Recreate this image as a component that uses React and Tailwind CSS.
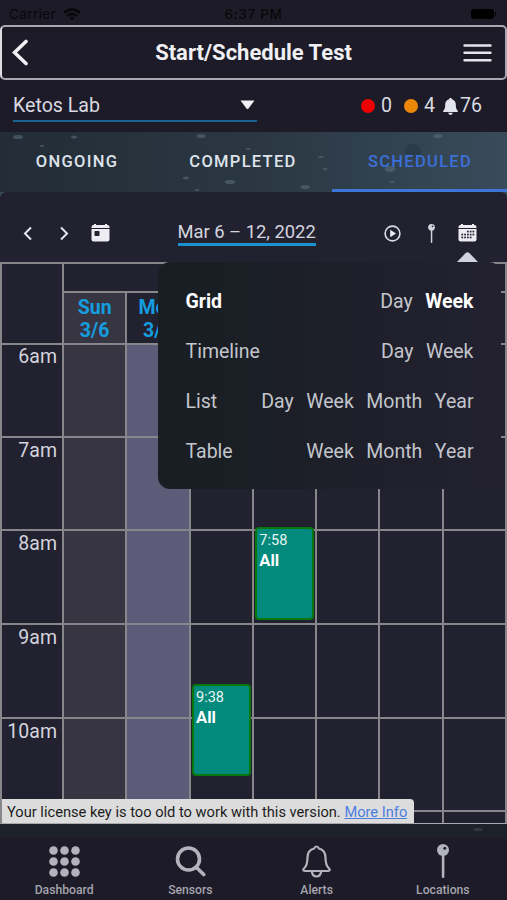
import React from 'react';

const HOURS = ['6am', '7am', '8am', '9am', '10am'];

const VIEWS = [
  { name: 'Grid', options: ['Day', 'Week'], active: true },
  { name: 'Timeline', options: ['Day', 'Week'] },
  { name: 'List', options: ['Day', 'Week', 'Month', 'Year'] },
  { name: 'Table', options: ['Week', 'Month', 'Year'] },
];

const DROPS = [
  [18, 5, 5, 2], [74, 5, 3, 1.5], [42, 14, 2.5, 1], [201, 4, 4.5, 2], [248, 17, 2.5, 1],
  [186, 46, 3, 1.5], [230, 50, 5.5, 2.2], [197, 58, 2.5, 1], [321, 25, 3, 1], [325, 37, 2.5, 1],
  [305, 55, 4.5, 2], [438, 4, 4.5, 2], [390, 37, 5.5, 3], [392, 50, 2.5, 1],
];

function Status() {
  return (
    <div className="flex h-[25px] shrink-0 items-center px-[9px] pt-[3px] text-[14.5px] leading-[20px] text-[#08080b]">
      <div className="flex flex-1 items-center gap-[7px]">
        <span className="font-['Inter','Roboto',sans-serif] text-[13.5px] tracking-[0.4px]">Carrier</span>
        <svg width="18" height="13" viewBox="0 0 18 13" fill="none" stroke="#08080b" strokeWidth="2.4">
          <path d="M1 4.8a11.5 11.5 0 0 1 16 0M4 8a7.2 7.2 0 0 1 10 0" />
          <path d="M9 12.5 6.5 10a3.6 3.6 0 0 1 5 0Z" fill="#08080b" stroke="none" />
        </svg>
      </div>
      <span className="pl-[2px] font-['Inter','Roboto',sans-serif] text-[13.5px] font-medium tracking-[0.7px]">6:37 PM</span>
      <div className="flex flex-1 items-center justify-end gap-px pr-[2px]">
        <div className="h-[10px] w-[23px] rounded-[3px] bg-black" />
        <div className="h-1 w-[1.5px] rounded-r bg-black" />
      </div>
    </div>
  );
}

function Pin({ w, h, color }) {
  return (
    <svg width={w} height={h} viewBox="0 0 12 34" fill={color}>
      <rect x="4.8" y="10" width="2.6" height="24" rx="1.2" />
      <circle cx="6" cy="6" r="6" />
      <circle cx="7.8" cy="4.2" r="1.5" fill="#22222f" />
    </svg>
  );
}

function Tabs() {
  return (
    <div className="relative grid h-[60px] shrink-0 grid-cols-[153px_179px_175px] bg-gradient-to-r from-[#232c37] via-[#2a3742] to-[#394b5b]">
      <svg className="absolute inset-0" width="507" height="60" fill="#5c707e" fillOpacity="0.55">
        <ellipse cx="413" cy="19" rx="8" ry="7" fill="#263442" />
        {DROPS.map(([x, y, rx, ry]) => (
          <ellipse key={x} cx={x} cy={y} rx={rx} ry={ry} />
        ))}
      </svg>
      {['ONGOING', 'COMPLETED', 'SCHEDULED'].map((t, i) => (
        <div
          key={t}
          className={
            'relative flex items-center justify-center border-b-[3px] pt-[3px] pl-px text-[16.5px] font-medium tracking-[1.3px] ' +
            (i === 2 ? 'border-[#3d75d8] text-[#3b70d8]' : 'border-transparent text-[#dfe3ea]')
          }
        >
          {t}
        </div>
      ))}
    </div>
  );
}

function Toolbar() {
  return (
    <div className="relative flex h-[70px] shrink-0 items-center rounded-t-md bg-[#222130] pt-[12px]">
      <div className="flex w-[177.500px] items-center pl-[23px]">
        <svg width="10" height="15" viewBox="0 0 10 15" fill="none" stroke="#e4e4ec" strokeWidth="2"><path d="M8 1.5 2 7.5l6 6" /></svg>
        <svg className="ml-[26px]" width="10" height="15" viewBox="0 0 10 15" fill="none" stroke="#e4e4ec" strokeWidth="2"><path d="m2 1.5 6 6-6 6" /></svg>
        <svg className="ml-[22px]" width="19" height="18" viewBox="0 0 19 18" fill="#ececf2">
          <path d="M2.5 1H3V0h2v1h9V0h2v1h.5A2 2 0 0 1 18.500 3v1H.5V3a2 2 0 0 1 2-2Z" />
          <path d="M.5 5h18V15.500a2 2 0 0 1-2 2h-14a2 2 0 0 1-2-2Z" />
          <rect x="3.500" y="7" width="5" height="5" rx=".8" fill="#222130" />
        </svg>
      </div>
      <div className="-mt-[1px] h-[26px] w-[138px] border-b-[3px] border-[#1b92d0] text-[18.350px] leading-[24px] whitespace-nowrap text-[#d5d5df]">Mar 6 – 12, 2022</div>
      <svg className="ml-[68px]" width="17" height="17" viewBox="0 0 17 17" fill="none" stroke="#dcdce4" strokeWidth="1.6">
        <circle cx="8.500" cy="8.500" r="7.400" />
        <path d="M6.200 4.800v7.400l5.800-3.700Z" fill="#ececf2" stroke="none" />
      </svg>
      <div className="ml-[27px] flex"><Pin w={7} h={19} color="#d4d4dc" /></div>
      <svg className="ml-[23.500px]" width="19" height="18" viewBox="0 0 19 18" fill="#ececf2">
        <path d="M2.500 1H3V0h2v1h9V0h2v1h.5A2 2 0 0 1 18.500 3v1H.5V3a2 2 0 0 1 2-2Z" />
        <path d="M.5 5h18V15.500a2 2 0 0 1-2 2h-14a2 2 0 0 1-2-2Z" />
        <g fill="#222130">
          {[[9, 6.700], [11.800, 6.700], [14.500, 6.700], [6.200, 9.700], [9, 9.700], [11.800, 9.700], [14.500, 9.700], [3.400, 9.700], [3.400, 12.600], [6.200, 12.600], [9, 12.600], [11.800, 12.600]].map(([x, y]) => (
            <rect key={`${x}-${y}`} x={x} y={y} width="1.700" height="1.700" />
          ))}
        </g>
      </svg>
      <svg className="absolute right-[29px] bottom-0" width="21" height="10" viewBox="0 0 21 10" fill="#d3d3df"><path d="M0 10 8.500 1.200q2-1.700 4 0L21 10Z" /></svg>
    </div>
  );
}

function Event({ time, className }) {
  return (
    <div className={'absolute left-[1px] z-10 w-[59px] rounded-[4px] border-2 border-[#08780e] bg-[#038a7c] px-[2.500px] pt-[1px] text-[#e9f5f3] ' + className}>
      <div className="text-[14.500px] leading-[21px]">{time}</div>
      <div className="text-[16.500px] leading-[19px] font-bold text-white">All</div>
    </div>
  );
}

function Calendar() {
  return (
    <div className="relative flex h-[562px] shrink-0 flex-col overflow-hidden border-2 border-b border-[#86868b] border-b-[#aaaab0] bg-[#222130]">
      <div className="relative z-10 flex h-[81px] shrink-0 border-b-2 border-[#86868b]">
        <div className="w-[60px] shrink-0" />
        <div className="flex flex-1 flex-col">
          <div className="h-[29px] border-b-2 border-l-2 border-[#86868b]" />
          <div className="grid flex-1 grid-cols-7 text-center text-[19.500px] leading-[23px] font-bold text-[#149ee0]">
            <div className="border-l-2 border-[#86868b] bg-[#373541] pt-[3px]">Sun<br />3/6</div>
            <div className="border-l-2 border-[#86868b] pt-[3px]">Mon<br />3/7</div>
            {['Tue', 'Wed', 'Thu', 'Fri', 'Sat'].map((d) => <div key={d} className="border-l-2 border-[#86868b]" />)}
          </div>
        </div>
      </div>
      <div className="-mt-px flex shrink-0">
        <div className="w-[60px] shrink-0">
          {HOURS.map((h) => (
            <div key={h} className="h-[93.700px] border-b-2 border-[#86868b] pr-[5px] text-right text-[19.500px] leading-[25px] text-[#d4d4de]">{h}</div>
          ))}
        </div>
        <div className="grid flex-1 grid-cols-7">
          {[0, 1, 2, 3, 4, 5, 6].map((d) => (
            <div
              key={d}
              className={'relative h-[500px] border-l-2 border-[#86868b] ' + (d === 0 ? 'bg-[#373541]' : d === 1 ? 'bg-[#5d5c78]' : '')}
            >
              {HOURS.map((h) => <div key={h} className="h-[93.700px] border-b-2 border-[#86868b]" />)}
              {d === 2 && <Event time="9:38" className="top-[340px] h-[92px]" />}
              {d === 3 && <Event time="7:58" className="top-[183px] h-[93px]" />}
            </div>
          ))}
        </div>
      </div>
      <div className="absolute bottom-0 left-0 z-20 h-[24px] w-[412px] rounded-tr-[4px] bg-[#dcdcdc] pl-[5px] text-[14.650px] leading-[27px] whitespace-nowrap text-[#1c1c1e]">
        Your license key is too old to work with this version. <span className="text-[#4a7fe0] underline">More Info</span>
      </div>
    </div>
  );
}

function ViewMenu() {
  return (
    <div className="absolute top-[262px] left-[158px] z-30 flex h-[227px] w-[343px] flex-col rounded-[12px] bg-gradient-to-r from-[#181e22] via-[#1d1f29] to-[#232130] px-[27.500px] pt-[15px] text-[19.500px] leading-[50px] text-[#c3c5cc]">
      {VIEWS.map((v) => (
        <div key={v.name} className="flex h-[50px] justify-between">
          <span className={v.active ? 'font-bold text-white' : ''}>{v.name}</span>
          <div className="flex gap-[12.500px]">
            {v.options.map((o) => (
              <span key={o} className={v.active && o === 'Week' ? 'font-bold text-white' : ''}>{o}</span>
            ))}
          </div>
        </div>
      ))}
    </div>
  );
}

function BottomNav() {
  const items = [
    ['Dashboard', (
      <svg key="d" width="31" height="31" viewBox="0 0 31 31" fill="#b3b3bd">
        {[4.500, 15.500, 26.500].map((y) => [4.500, 15.500, 26.500].map((x) => <circle key={`${x}-${y}`} cx={x} cy={y} r="4.300" />))}
      </svg>
    )],
    ['Sensors', (
      <svg key="s" width="31" height="31" viewBox="0 0 31 31" fill="none" stroke="#b3b3bd" strokeWidth="3.600" strokeLinecap="round">
        <circle cx="13.500" cy="13" r="11" /><path d="m21.500 21.500 7.200 7" />
      </svg>
    )],
    ['Alerts', (
      <svg key="a" width="29" height="33" viewBox="0 0 29 33" fill="none" stroke="#b3b3bd" strokeWidth="2.200" strokeLinejoin="round">
        <path d="M14.500 1.500c-1.500 0-2 1-2.300 2C8 4.500 5.500 8 5.500 12.500c0 6-.8 8.500-3.500 11-1.300 1.300-.8 2.500.8 2.500h23.400c1.600 0 2.100-1.200.8-2.500-2.700-2.500-3.500-5-3.500-11 0-4.500-2.500-8-6.700-9-.3-1-.8-2-2.300-2Z" />
        <path d="M9.800 26.500c.5 3.300 2.200 5 4.700 5s4.200-1.700 4.700-5" />
      </svg>
    )],
    ['Locations', <Pin key="l" w={12} h={34} color="#b3b3bd" />],
  ];
  return (
    <div className="grid h-[62px] shrink-0 grid-cols-4 bg-[#1c1b27] px-px">
      {items.map(([label, icon]) => (
        <div key={label} className="flex flex-col items-center">
          <div className="flex h-[43px] items-center pt-[3px]">{icon}</div>
          <span className="text-[12.200px] leading-[19px] font-medium text-[#a4a4ae]">{label}</span>
        </div>
      ))}
    </div>
  );
}

export default function App() {
  return (
    <div className="relative flex h-[900px] w-[507px] flex-col overflow-hidden bg-[#1c1b27] font-['Roboto',sans-serif]">
      <Status />
      <div className="flex h-[55px] shrink-0 items-center justify-between rounded-[5px] border-2 border-[#a8a8b0] border-l-[#dcdce2] pr-[13px] pl-[10px]">
        <svg width="17" height="27" viewBox="0 0 17 27" fill="none" stroke="#f2f2f6" strokeWidth="3.600" strokeLinecap="round"><path d="M14 2.500 2.500 13.500 14 24.500" /></svg>
        <div className="pl-[15px] text-[22px] font-bold whitespace-nowrap text-[#f0f0f4]">Start/Schedule Test</div>
        <svg width="29" height="19" viewBox="0 0 29 19" stroke="#e4e4ea" strokeWidth="2.400" strokeLinecap="round"><path d="M1.500 2.500h26M1.500 9.800h26M1.500 17.200h26" /></svg>
      </div>
      <div className="flex h-[52px] shrink-0 items-start px-[13px] text-[19.600px] leading-[26px] text-[#d9d9e1]">
        <div className="mt-[13px] flex h-[29px] w-[244px] items-start justify-between border-b-2 border-[#17658f]">
          <span>Ketos Lab</span>
          <svg className="mt-[7px] mr-[2px]" width="15" height="10" viewBox="0 0 15 10" fill="#f2f2f6"><path d="M.5.500h14L8.500 8.500q-1 1.200-2 0Z" /></svg>
        </div>
        <div className="mt-[13px] ml-[104px] flex items-center">
          <div className="h-[14px] w-[14px] rounded-full bg-[#ee0202]" />
          <span className="ml-[6px]">0</span>
          <div className="ml-[12px] h-[14px] w-[14px] rounded-full bg-[#ec870a]" />
          <span className="ml-[6px]">4</span>
          <svg className="ml-[8px]" width="15" height="17" viewBox="0 0 15 17" fill="#e4e4ee">
            <path d="M7.500 0C6.600 0 6.200.500 6.100 1.300 3.500 1.900 2.200 4 2.200 6.500c0 3.800-.6 5-2 6.300-.4.600 0 1.300.7 1.300h13.200c.7 0 1.100-.700.7-1.300-1.400-1.300-2-2.500-2-6.300 0-2.500-1.300-4.600-3.900-5.200C8.800.500 8.400 0 7.500 0ZM5.300 14.800c.2 1.400 1 2.100 2.200 2.100s2-.700 2.200-2.100Z" />
          </svg>
          <span className="ml-[2px]">76</span>
        </div>
      </div>
      <Tabs />
      <div className="flex shrink-0 flex-col bg-[#394b5b]"><Toolbar /></div>
      <Calendar />
      <div className="h-[14px] shrink-0 bg-[#1c212a]">
        <svg width="507" height="14" fill="#36404a" fillOpacity="0.7"><ellipse cx="478" cy="5.500" rx="5" ry="1.800" /></svg>
      </div>
      <BottomNav />
      <ViewMenu />
    </div>
  );
}
